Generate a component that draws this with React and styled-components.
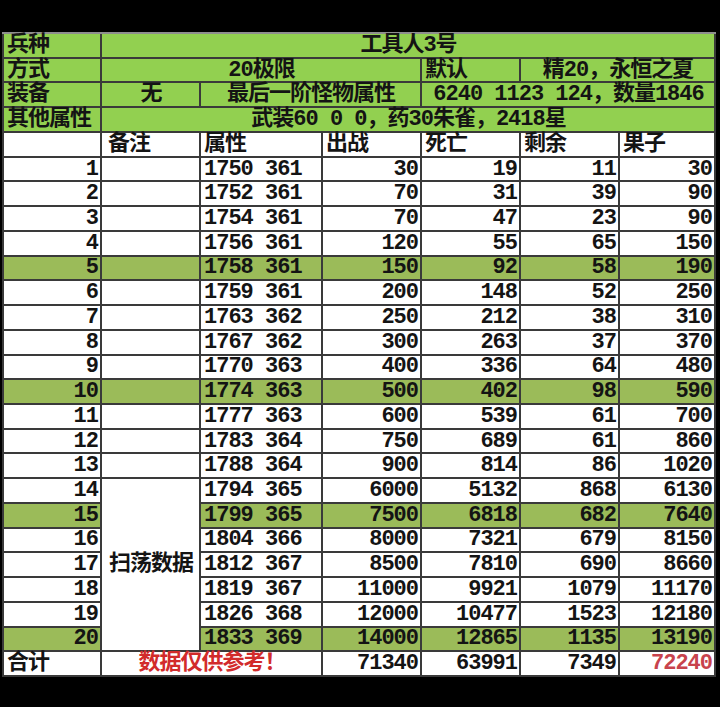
import React from 'react';
import styled, { createGlobalStyle } from 'styled-components';

const Global = createGlobalStyle`
  html, body { margin: 0; padding: 0; background: #000; }
  body { width: 720px; height: 707px; overflow: hidden; }
`;

const Page = styled.div`
  width: 720px;
  height: 707px;
  background: #000;
  padding-top: 32px;
  box-sizing: border-box;
`;

const Sheet = styled.div`
  margin-left: 2px;
  width: 714px;
  height: 645px;
  box-sizing: border-box;
  padding: 0 2px 2px 2px;
  border-top: 2px solid #8e8e8e;
  background: #3a3a3a;
  display: grid;
  grid-template-columns: 96px 97px 120px 97px 97px 97px 94px;
  grid-template-rows: repeat(26, 1fr);
  gap: 2px;
  font-family: "Liberation Mono", "Noto Sans CJK SC", monospace;
  font-size: 22px;
  font-weight: 700;
  letter-spacing: -1px;
`;

const Cell = styled.div`
  grid-column: span ${(p) => p.$span || 1};
  grid-row: span ${(p) => p.$rows || 1};
  background: ${(p) => p.$bg || '#ffffff'};
  color: ${(p) => p.$color || '#141414'};
  display: flex;
  align-items: center;
  justify-content: ${(p) =>
    p.$align === 'right' ? 'flex-end' : p.$align === 'center' ? 'center' : 'flex-start'};
  padding: 1px 2px 0 ${(p) => (p.$indent != null ? p.$indent : 3)}px;
  line-height: 1;
  white-space: pre;
  min-width: 0;
  min-height: 0;
`;

const HEAD = '#92d050';
const MARK = '#9bbb59';

const rows = [
  ['1750 361', 30, 19, 11, 30],
  ['1752 361', 70, 31, 39, 90],
  ['1754 361', 70, 47, 23, 90],
  ['1756 361', 120, 55, 65, 150],
  ['1758 361', 150, 92, 58, 190],
  ['1759 361', 200, 148, 52, 250],
  ['1763 362', 250, 212, 38, 310],
  ['1767 362', 300, 263, 37, 370],
  ['1770 363', 400, 336, 64, 480],
  ['1774 363', 500, 402, 98, 590],
  ['1777 363', 600, 539, 61, 700],
  ['1783 364', 750, 689, 61, 860],
  ['1788 364', 900, 814, 86, 1020],
  ['1794 365', 6000, 5132, 868, 6130],
  ['1799 365', 7500, 6818, 682, 7640],
  ['1804 366', 8000, 7321, 679, 8150],
  ['1812 367', 8500, 7810, 690, 8660],
  ['1819 367', 11000, 9921, 1079, 11170],
  ['1826 368', 12000, 10477, 1523, 12180],
  ['1833 369', 14000, 12865, 1135, 13190],
];

export default function App() {
  return (
    <Page>
      <Global />
      <Sheet>
        <Cell $bg={HEAD}>兵种</Cell>
        <Cell $bg={HEAD} $span={6} $align="center">工具人3号</Cell>

        <Cell $bg={HEAD}>方式</Cell>
        <Cell $bg={HEAD} $span={3} $align="center">20极限</Cell>
        <Cell $bg={HEAD}>默认</Cell>
        <Cell $bg={HEAD} $span={2} $align="center">精20，永恒之夏</Cell>

        <Cell $bg={HEAD}>装备</Cell>
        <Cell $bg={HEAD} $align="center">无</Cell>
        <Cell $bg={HEAD} $span={2} $align="center">最后一阶怪物属性</Cell>
        <Cell $bg={HEAD} $span={3} $align="center">6240 1123 124，数量1846</Cell>

        <Cell $bg={HEAD}>其他属性</Cell>
        <Cell $bg={HEAD} $span={6} $align="center">武装60 0 0，药30朱雀，2418星</Cell>

        <Cell />
        <Cell $indent={6}>备注</Cell>
        <Cell>属性</Cell>
        <Cell>出战</Cell>
        <Cell>死亡</Cell>
        <Cell>剩余</Cell>
        <Cell>果子</Cell>

        {rows.map((r, i) => {
          const n = i + 1;
          const bg = n % 5 === 0 ? MARK : undefined;
          return (
            <React.Fragment key={n}>
              <Cell $bg={bg} $align="right">{n}</Cell>
              {n < 14 && <Cell $bg={bg} />}
              {n === 14 && (
                <Cell $rows={7} $align="center">扫荡数据</Cell>
              )}
              <Cell $bg={bg}>{r[0]}</Cell>
              <Cell $bg={bg} $align="right">{r[1]}</Cell>
              <Cell $bg={bg} $align="right">{r[2]}</Cell>
              <Cell $bg={bg} $align="right">{r[3]}</Cell>
              <Cell $bg={bg} $align="right">{r[4]}</Cell>
            </React.Fragment>
          );
        })}

        <Cell>合计</Cell>
        <Cell $span={2} $align="center" $color="#d22b2b">数据仅供参考！</Cell>
        <Cell $align="right">71340</Cell>
        <Cell $align="right">63991</Cell>
        <Cell $align="right">7349</Cell>
        <Cell $align="right" $color="#c8434d">72240</Cell>
      </Sheet>
    </Page>
  );
}
